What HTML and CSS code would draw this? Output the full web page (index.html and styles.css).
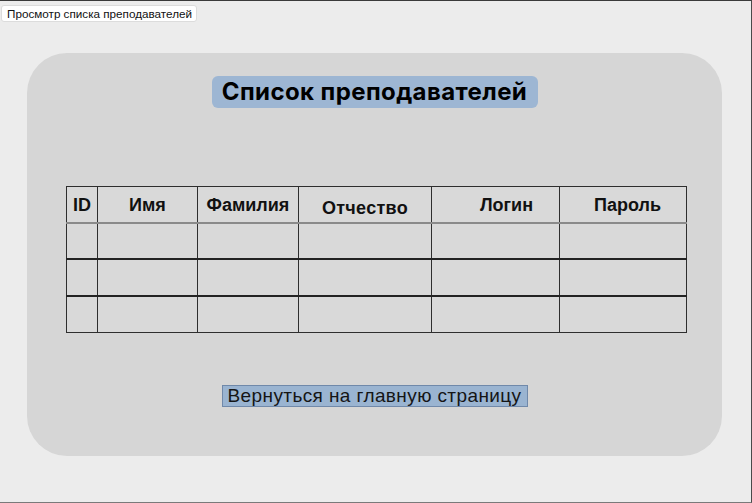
FILE: index.html
```
<!DOCTYPE html>
<html lang="ru">
<head>
<meta charset="utf-8">
<title>Просмотр списка преподавателей</title>
<link rel="stylesheet" href="styles.css">
</head>
<body>
<div class="window">
  <div class="tab">Просмотр списка преподавателей</div>
  <div class="panel">
    <div class="title">Список преподавателей</div>
    <table class="grid">
      <colgroup>
        <col class="c1"><col class="c2"><col class="c3"><col class="c4"><col class="c5"><col class="c6">
      </colgroup>
      <thead>
        <tr>
          <th class="h-id">ID</th>
          <th>Имя</th>
          <th>Фамилия</th>
          <th><span class="low">Отчество</span></th>
          <th class="h-right">Логин</th>
          <th class="h-right2">Пароль</th>
        </tr>
      </thead>
      <tbody>
        <tr class="r1"><td></td><td></td><td></td><td></td><td></td><td></td></tr>
        <tr class="r2"><td></td><td></td><td></td><td></td><td></td><td></td></tr>
        <tr class="r3"><td></td><td></td><td></td><td></td><td></td><td></td></tr>
      </tbody>
    </table>
    <div class="actions">
      <button class="back">Вернуться на главную страницу</button>
    </div>
  </div>
</div>
</body>
</html>
```
FILE: styles.css
```
html, body {
  margin: 0;
  padding: 0;
}
body {
  width: 752px;
  height: 503px;
  overflow: hidden;
  background: #ececec;
  font-family: "Liberation Sans", Arial, sans-serif;
}
.window {
  box-sizing: border-box;
  width: 752px;
  height: 503px;
  border-top: 1px solid #3a3a3a;
  border-right: 1px solid #4a4a4a;
  border-bottom: 1px solid #7a7a7a;
  background: #ececec;
  padding-top: 4px;
}
.tab {
  width: fit-content;
  margin-left: 1px;
  box-sizing: border-box;
  height: 17px;
  padding: 0 4px 0 5px;
  line-height: 15px;
  font-size: 11.7px;
  color: #111;
  background: #ffffff;
  border: 1px solid #dcdcdc;
  border-radius: 3px;
}
.panel {
  box-sizing: border-box;
  margin: 31px 0 0 27px;
  width: 695px;
  height: 403px;
  background: #d6d6d6;
  border-radius: 40px;
  padding-top: 23px;
}
.title {
  width: 326px;
  height: 32px;
  margin: 0 auto;
  box-sizing: border-box;
  background: #9db6d3;
  border-radius: 6px;
  text-align: center;
  font-family: Inter, "Liberation Sans", sans-serif;
  font-weight: 700;
  font-size: 24px;
  line-height: 32px;
  color: #000;
  letter-spacing: 0.4px;
}
.grid {
  margin: 78px 0 0 39px;
  width: 621px;
  border-collapse: collapse;
  table-layout: fixed;
  background: #d9d9d9;
}
.c1 { width: 31px; }
.c2 { width: 100px; }
.c3 { width: 101px; }
.c4 { width: 133px; }
.c5 { width: 128px; }
.c6 { width: 127px; }
.grid th, .grid td {
  border: 1px solid #2e2e2e;
  padding: 0;
}
.grid th {
  height: 35px;
  font-size: 18px;
  font-weight: 700;
  color: #111;
  text-align: center;
  vertical-align: middle;
  border-bottom: 2px solid #8a8a8a;
  line-height: 20px;
}
.grid th .low { position: relative; top: 3px; letter-spacing: 0.3px; }
.grid th.h-right { padding-left: 22px; }
.grid th.h-right2 { padding-left: 9px; }
.grid tbody td { height: 34px; }
.grid tbody tr.r2 td, .grid tbody tr.r3 td { height: 35px; }
.grid tbody tr.r2 td, .grid tbody tr.r3 td { border-top: 2px solid #222; }
.actions {
  margin-top: 52px;
  display: flex;
  justify-content: center;
}
.back {
  box-sizing: border-box;
  width: 306px;
  height: 22px;
  margin: 0;
  padding: 0;
  background: #9ab4d1;
  border: 1px solid #7089aa;
  border-radius: 0;
  font-family: "Liberation Sans", Arial, sans-serif;
  font-size: 19px;
  letter-spacing: 0.4px;
  line-height: 20px;
  color: #151515;
}
```
